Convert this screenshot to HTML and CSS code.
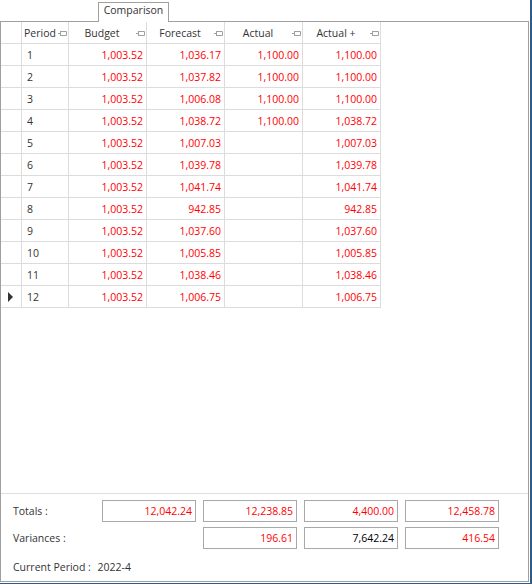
FILE: index.html
```html
<!DOCTYPE html>
<html>
<head>
<meta charset="utf-8">
<link rel="stylesheet" href="styles.css">
</head>
<body>
<div class="frame">
  <div class="tabs"><div class="tab">Comparison</div></div>
  <div class="panel">
    <div class="grid-area">
      <div class="row head">
        <div class="c ind"></div>
        <div class="c per"><span>Period</span><svg class="pin" viewBox="0 0 9 5" width="9" height="5"><path d="M0 2.5H2.5M2.5 0V5M3 0.5H8.5V4.5H3" fill="none" stroke="#a0a0a0" stroke-width="1"/></svg></div>
        <div class="c num"><span>Budget</span><svg class="pin" viewBox="0 0 9 5" width="9" height="5"><path d="M0 2.5H2.5M2.5 0V5M3 0.5H8.5V4.5H3" fill="none" stroke="#a0a0a0" stroke-width="1"/></svg></div>
        <div class="c num"><span>Forecast</span><svg class="pin" viewBox="0 0 9 5" width="9" height="5"><path d="M0 2.5H2.5M2.5 0V5M3 0.5H8.5V4.5H3" fill="none" stroke="#a0a0a0" stroke-width="1"/></svg></div>
        <div class="c num"><span>Actual</span><svg class="pin" viewBox="0 0 9 5" width="9" height="5"><path d="M0 2.5H2.5M2.5 0V5M3 0.5H8.5V4.5H3" fill="none" stroke="#a0a0a0" stroke-width="1"/></svg></div>
        <div class="c num"><span>Actual +</span><svg class="pin" viewBox="0 0 9 5" width="9" height="5"><path d="M0 2.5H2.5M2.5 0V5M3 0.5H8.5V4.5H3" fill="none" stroke="#a0a0a0" stroke-width="1"/></svg></div>
      </div>
      <div class="row"><div class="c ind"></div><div class="c per">1</div><div class="c num">1,003.52</div><div class="c num">1,036.17</div><div class="c num">1,100.00</div><div class="c num">1,100.00</div></div>
      <div class="row"><div class="c ind"></div><div class="c per">2</div><div class="c num">1,003.52</div><div class="c num">1,037.82</div><div class="c num">1,100.00</div><div class="c num">1,100.00</div></div>
      <div class="row"><div class="c ind"></div><div class="c per">3</div><div class="c num">1,003.52</div><div class="c num">1,006.08</div><div class="c num">1,100.00</div><div class="c num">1,100.00</div></div>
      <div class="row"><div class="c ind"></div><div class="c per">4</div><div class="c num">1,003.52</div><div class="c num">1,038.72</div><div class="c num">1,100.00</div><div class="c num">1,038.72</div></div>
      <div class="row"><div class="c ind"></div><div class="c per">5</div><div class="c num">1,003.52</div><div class="c num">1,007.03</div><div class="c num"></div><div class="c num">1,007.03</div></div>
      <div class="row"><div class="c ind"></div><div class="c per">6</div><div class="c num">1,003.52</div><div class="c num">1,039.78</div><div class="c num"></div><div class="c num">1,039.78</div></div>
      <div class="row"><div class="c ind"></div><div class="c per">7</div><div class="c num">1,003.52</div><div class="c num">1,041.74</div><div class="c num"></div><div class="c num">1,041.74</div></div>
      <div class="row"><div class="c ind"></div><div class="c per">8</div><div class="c num">1,003.52</div><div class="c num">942.85</div><div class="c num"></div><div class="c num">942.85</div></div>
      <div class="row"><div class="c ind"></div><div class="c per">9</div><div class="c num">1,003.52</div><div class="c num">1,037.60</div><div class="c num"></div><div class="c num">1,037.60</div></div>
      <div class="row"><div class="c ind"></div><div class="c per">10</div><div class="c num">1,003.52</div><div class="c num">1,005.85</div><div class="c num"></div><div class="c num">1,005.85</div></div>
      <div class="row"><div class="c ind"></div><div class="c per">11</div><div class="c num">1,003.52</div><div class="c num">1,038.46</div><div class="c num"></div><div class="c num">1,038.46</div></div>
      <div class="row"><div class="c ind"><span class="arrow"></span></div><div class="c per">12</div><div class="c num">1,003.52</div><div class="c num">1,006.75</div><div class="c num"></div><div class="c num">1,006.75</div></div>
    </div>
    <div class="footer">
      <div class="frow"><div class="lbl">Totals :</div><div class="box">12,042.24</div><div class="box">12,238.85</div><div class="box">4,400.00</div><div class="box">12,458.78</div></div>
      <div class="frow"><div class="lbl">Variances :</div><div class="spacer"></div><div class="box">196.61</div><div class="box black">7,642.24</div><div class="box">416.54</div></div>
      <div class="cur">Current Period : <span class="val">2022-4</span></div>
    </div>
  </div>
</div>
</body>
</html>
```

FILE: styles.css
```css
* { box-sizing: border-box; }
body {
  margin: 0;
  background: #fff;
  font-family: "Open Sans", "Noto Sans", sans-serif;
  font-size: 10.5px;
  color: #333;
}
.frame {
  width: 532px;
  height: 584px;
  border-right: 2px solid #2f5b8a;
  border-bottom: 1px solid #2f5b8a;
  background: #fff;
  display: flex;
  flex-direction: column;
}
.tabs {
  height: 21px;
  padding-left: 98px;
  display: flex;
  align-items: flex-end;
  flex: none;
}
.tab {
  width: 71px;
  height: 20px;
  margin-bottom: -1px;
  position: relative;
  z-index: 1;
  background: #fff;
  border: 1px solid #a0a0a0;
  border-bottom: none;
  text-align: center;
  line-height: 15px;
  color: #333;
}
.panel {
  width: 529px;
  height: 561px;
  border: 1px solid #a0a0a0;
  display: flex;
  flex-direction: column;
  flex: none;
}
.grid-area {
  height: 472px;
  border-bottom: 1px solid #dedede;
  flex: none;
}
.row {
  display: flex;
  height: 22px;
}
.c {
  height: 22px;
  border-right: 1px solid #dcdcdc;
  border-bottom: 1px solid #dcdcdc;
  display: flex;
  align-items: center;
  white-space: nowrap;
  color: #ff0000;
}
.ind { width: 21px; position: relative; }
.per { width: 47px; padding-left: 5px; color: #333; }
.num { width: 78px; justify-content: flex-end; padding-right: 3px; }
.head .c {
  color: #333;
  justify-content: center;
  padding: 0 11px 0 0;
  position: relative;
}
.head .per span { padding-left: 1px; }
.pin {
  position: absolute;
  right: 1px;
  top: 9px;
}
.arrow {
  position: absolute;
  left: 7px;
  top: 6px;
  width: 0;
  height: 0;
  border-top: 5px solid transparent;
  border-bottom: 5px solid transparent;
  border-left: 5px solid #333;
}
.footer {
  padding: 6px 0 0 12px;
  display: flex;
  flex-direction: column;
  gap: 5px;
}
.frow {
  display: flex;
  align-items: center;
  height: 22px;
}
.lbl { width: 89px; color: #333; }
.box {
  width: 94px;
  height: 22px;
  margin-right: 7px;
  border: 1px solid #a8a8a8;
  display: flex;
  align-items: center;
  justify-content: flex-end;
  padding-right: 3px;
  color: #ff0000;
}
.box.black { color: #000; }
.spacer { width: 94px; margin-right: 7px; }
.cur {
  margin-top: 5px;
  line-height: 16px;
  color: #333;
}
.val { margin-left: 4px; }
```
